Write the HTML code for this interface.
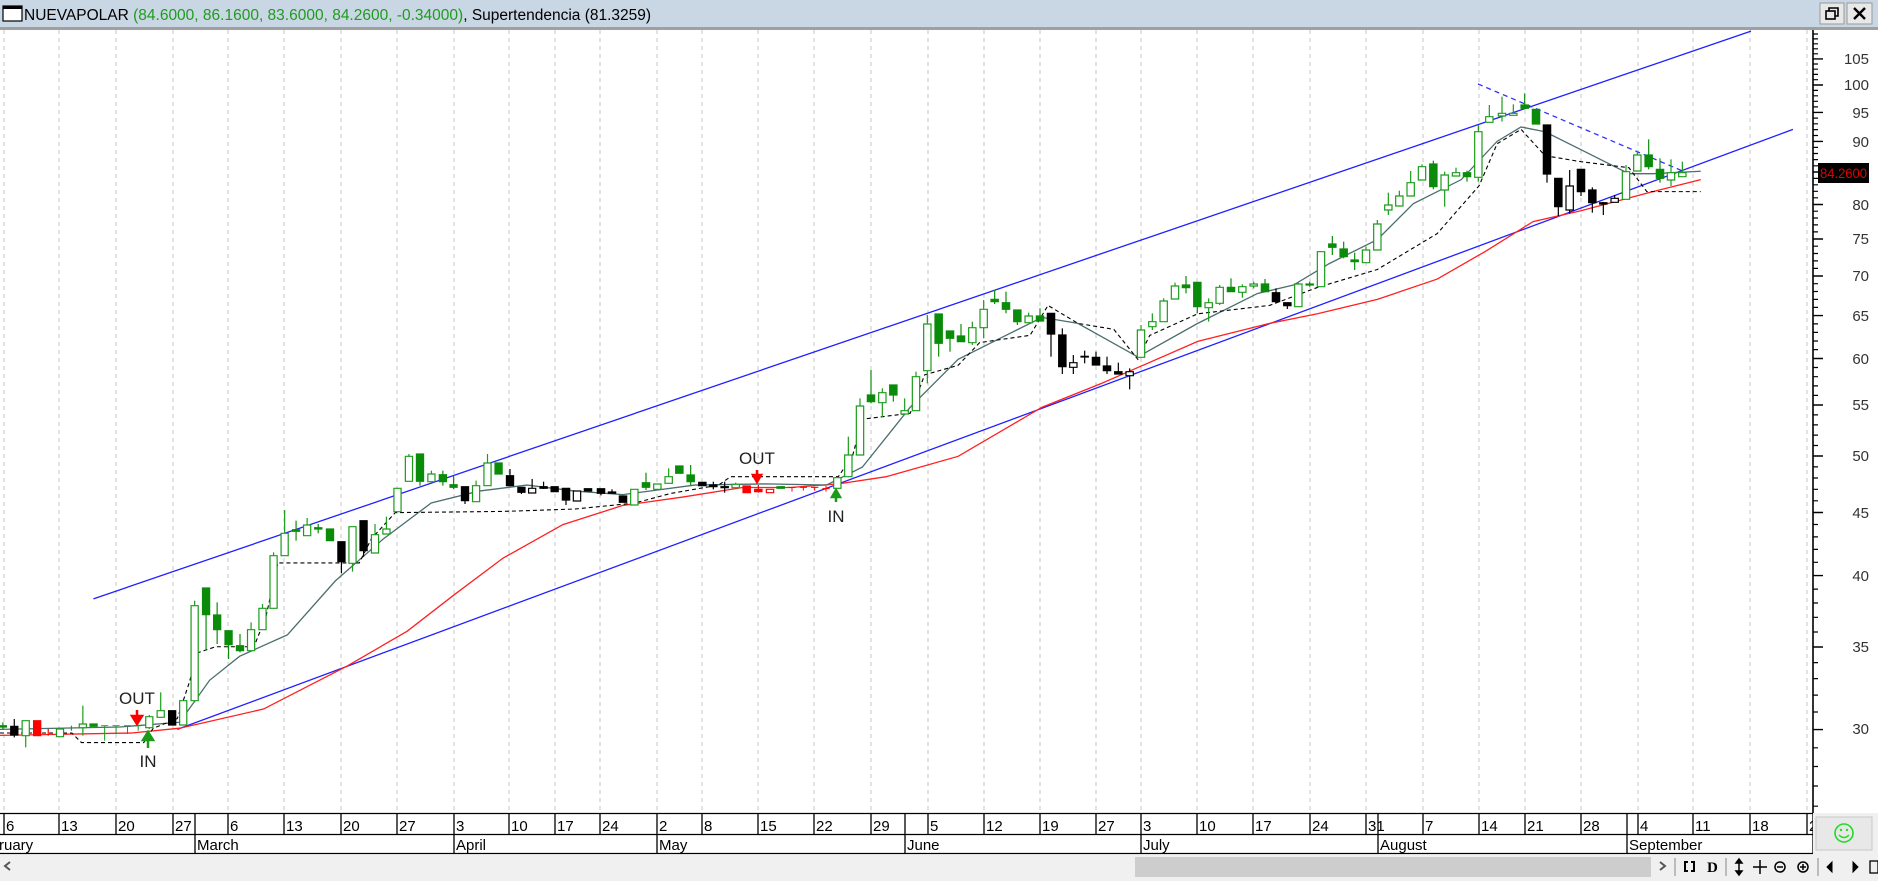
<!DOCTYPE html>
<html><head><meta charset="utf-8"><style>
html,body{margin:0;padding:0;background:#fff;}
svg{display:block;font-family:"Liberation Sans",sans-serif;}
.c line,.c rect{vector-effect:non-scaling-stroke;stroke-width:1.2;}
.g{fill:#fff;stroke:#1a9c1a;} .G{fill:#0a8c0a;stroke:#0a8c0a;}
.k{fill:#000;stroke:#000;} .w{fill:#fff;stroke:#000;}
.r{fill:#f00;stroke:#f00;} .rw{fill:#fff;stroke:#f00;}
.ln{fill:none;vector-effect:non-scaling-stroke;}
</style></head><body>
<svg width="1878" height="881" viewBox="0 0 1878 881" xmlns="http://www.w3.org/2000/svg">
<rect x="0" y="0" width="1878" height="881" fill="#fff"/>
<!-- title bar -->
<rect x="0" y="0" width="1878" height="27" fill="#c9d6e3"/>
<rect x="0" y="27" width="1878" height="3" fill="#a0a0a0"/>
<rect x="3" y="6" width="19" height="15" fill="#fff" stroke="#000" stroke-width="1.2"/>
<rect x="3" y="6" width="19" height="3" fill="#000"/>
<text x="24" y="20" font-size="15.5" fill="#000">NUEVAPOLAR <tspan fill="#1f9b1f">(84.6000, 86.1600, 83.6000, 84.2600, -0.34000)</tspan>, Supertendencia (81.3259)</text>
<rect x="1820" y="3" width="24" height="21" fill="#e8e8e8" stroke="#999"/>
<rect x="1826" y="11" width="9" height="8" fill="none" stroke="#000" stroke-width="1.6"/>
<path d="M1829 11V8h9v8h-3" fill="none" stroke="#000" stroke-width="1.6"/>
<rect x="1847" y="3" width="25" height="21" fill="#e8e8e8" stroke="#999"/>
<path d="M1854 8l11 11M1865 8l-11 11" stroke="#000" stroke-width="2.4"/>

<!-- grid -->
<g stroke="#c4c4c4" stroke-dasharray="4,4" stroke-width="1">
<path d="M4 30V812M59 30V812M116 30V812M173 30V812M228 30V812M284 30V812M341 30V812M397 30V812M454 30V812M509 30V812M555 30V812M600 30V812M657 30V812M702 30V812M758 30V812M814 30V812M871 30V812M928 30V812M984 30V812M1040 30V812M1096 30V812M1141 30V812M1197 30V812M1253 30V812M1310 30V812M1366 30V812M1423 30V812M1479 30V812M1525 30V812M1581 30V812M1638 30V812M1693 30V812M1750 30V812M1807 30V812"/>
</g>

<!-- lines in displayed coords -->
<g transform="scale(1.19770)">
<path class="ln" stroke="#2020ff" stroke-width="1.3" d="M78 500L1462 26"/>
<path class="ln" stroke="#2020ff" stroke-width="1.3" d="M148 609L1497 108"/>
<path class="ln" stroke="#ff2020" stroke-width="1.3" d="M0 614L110 612L150 608L220 592L290 556L340 527L380 496L420 466L470 438L520 422L570 415L620 407L660 407L700 404L740 398L800 381L870 340L920 320L1000 285L1060 270L1100 262L1150 250L1200 233L1240 210L1280 185L1320 176L1380 160L1420 150"/>
<path class="ln" stroke="#4b6e6e" stroke-width="1.3" d="M0 609L100 607L150 603L175 568L200 548L240 530L280 485L320 450L360 420L400 410L440 405L480 410L520 413L580 405L640 404L690 405L720 390L760 340L800 300L840 280L870 265L900 270L950 298L1000 270L1050 245L1080 238L1110 220L1150 200L1180 170L1220 150L1250 118L1270 106L1290 110L1320 125L1360 145L1380 145L1420 143"/>
<path class="ln" stroke="#000" stroke-width="1.1" stroke-dasharray="4,3" d="M0 612L60 612L68 620L120 620L128 608L148 600L158 570L165 545L180 540L212 540L222 515L232 470L300 470L310 450L330 428L420 427L480 425L530 420L560 412L600 405L610 398L660 398L700 398L712 380L720 350L760 345L772 313L800 305L818 286L860 280L875 255L900 270L930 275L950 300L960 280L1000 262L1060 255L1100 240L1150 225L1200 195L1235 155L1250 120L1270 108L1290 130L1320 135L1360 140L1375 160L1420 160"/>
</g>
<path stroke="#3030ff" stroke-width="1.3" stroke-dasharray="5,4" d="M1478 84L1685 172"/>

<!-- candles zoom4 -->
<g class="c" transform="translate(0,439) scale(0.357143,0.333333)">
<g class="G"><line x1="8" y1="850" x2="8" y2="870"/><rect x="-2" y="860" width="20" height="4"/></g>
<g class="k"><line x1="40" y1="840" x2="40" y2="895"/><rect x="30" y="862" width="20" height="26"/></g>
<g class="g"><line x1="72" y1="845" x2="72" y2="925"/><rect x="62" y="845" width="20" height="45"/></g>
<g class="r"><rect x="94" y="845" width="20" height="45"/></g>
<g class="r"><line x1="135" y1="870" x2="135" y2="890"/></g>
<g class="g"><rect x="158" y="870" width="20" height="23"/></g>
<g class="g"><line x1="200" y1="860" x2="200" y2="875"/></g>
<g class="g"><line x1="232" y1="800" x2="232" y2="890"/><rect x="222" y="855" width="20" height="11"/></g>
<g class="G"><rect x="252" y="855" width="20" height="7"/></g>
<g class="g"><path d="M283 860h20M293 860v45M315 860h20M325 860v25M347 860h20M357 860v25M377 860h20M387 860v15" stroke="#1a9c1a" stroke-width="2.8" fill="none"/></g>
<g class="g"><line x1="418" y1="828" x2="418" y2="870"/><rect x="408" y="833" width="20" height="33"/></g>
<g class="g"><line x1="450" y1="760" x2="450" y2="835"/><rect x="440" y="815" width="20" height="20"/></g>
<g class="k"><rect x="472" y="815" width="20" height="43"/></g>
<g class="g"><rect x="503" y="785" width="20" height="73"/></g>
<g class="g"><line x1="545" y1="485" x2="545" y2="790"/><rect x="535" y="500" width="20" height="285"/></g>
<g class="G"><line x1="577" y1="447" x2="577" y2="635"/><rect x="567" y="447" width="20" height="80"/></g>
<g class="G"><line x1="608" y1="490" x2="608" y2="615"/><rect x="598" y="528" width="20" height="44"/></g>
<g class="G"><line x1="640" y1="575" x2="640" y2="660"/><rect x="630" y="575" width="20" height="42"/></g>
<g class="G"><line x1="672" y1="585" x2="672" y2="640"/><rect x="662" y="620" width="20" height="15"/></g>
<g class="g"><line x1="703" y1="550" x2="703" y2="635"/><rect x="693" y="572" width="20" height="63"/></g>
<g class="g"><line x1="735" y1="495" x2="735" y2="572"/><rect x="725" y="508" width="20" height="64"/></g>
<g class="g"><line x1="766" y1="340" x2="766" y2="508"/><rect x="756" y="350" width="20" height="158"/></g>
<g class="g"><line x1="797" y1="213" x2="797" y2="350"/><rect x="787" y="283" width="20" height="67"/></g>
<g class="G"><line x1="829" y1="245" x2="829" y2="305"/><rect x="819" y="272" width="20" height="5"/></g>
<g class="g"><line x1="860" y1="237" x2="860" y2="290"/><rect x="850" y="258" width="20" height="32"/></g>
<g class="G"><line x1="891" y1="255" x2="891" y2="283"/><rect x="881" y="266" width="20" height="4"/></g>
<g class="G"><rect x="914" y="270" width="20" height="35"/></g>
<g class="k"><line x1="956" y1="308" x2="956" y2="403"/><rect x="946" y="308" width="20" height="60"/></g>
<g class="g"><line x1="987" y1="263" x2="987" y2="398"/><rect x="977" y="263" width="20" height="110"/></g>
<g class="k"><line x1="1018" y1="245" x2="1018" y2="353"/><rect x="1008" y="245" width="20" height="90"/></g>
<g class="g"><line x1="1050" y1="255" x2="1050" y2="342"/><rect x="1040" y="287" width="20" height="55"/></g>
<g class="g"><line x1="1082" y1="233" x2="1082" y2="285"/><rect x="1072" y="270" width="20" height="15"/></g>
<g class="g"><line x1="1113" y1="148" x2="1113" y2="220"/><rect x="1103" y="148" width="20" height="70"/></g>
<g class="g"><line x1="1145" y1="45" x2="1145" y2="127"/><rect x="1135" y="52" width="20" height="75"/></g>
<g class="G"><line x1="1176" y1="45" x2="1176" y2="140"/><rect x="1166" y="45" width="20" height="82"/></g>
<g class="g"><line x1="1208" y1="95" x2="1208" y2="128"/><rect x="1198" y="105" width="20" height="23"/></g>
<g class="G"><line x1="1240" y1="95" x2="1240" y2="140"/><rect x="1230" y="107" width="20" height="21"/></g>
<g class="G"><line x1="1270" y1="110" x2="1270" y2="150"/><rect x="1260" y="137" width="20" height="8"/></g>
<g class="k"><line x1="1302" y1="143" x2="1302" y2="195"/><rect x="1292" y="143" width="20" height="42"/></g>
<g class="g"><line x1="1333" y1="125" x2="1333" y2="188"/><rect x="1323" y="140" width="20" height="48"/></g>
<g class="g"><line x1="1365" y1="45" x2="1365" y2="140"/><rect x="1355" y="72" width="20" height="68"/></g>
<g class="G"><rect x="1386" y="72" width="20" height="33"/></g>
<g class="k"><line x1="1428" y1="90" x2="1428" y2="140"/><rect x="1418" y="110" width="20" height="30"/></g>
<g class="k"><line x1="1460" y1="145" x2="1460" y2="165"/><rect x="1450" y="145" width="20" height="15"/></g>
<g class="w"><line x1="1490" y1="120" x2="1490" y2="162"/><rect x="1480" y="148" width="20" height="14"/></g>
<g class="k"><line x1="1522" y1="128" x2="1522" y2="150"/><rect x="1512" y="143" width="20" height="5"/></g>
<g class="k"><rect x="1543" y="143" width="20" height="15"/></g>
</g>

<!-- candles zoom5 -->
<g class="c" transform="translate(440,430) scale(0.333333)">
<g class="k"><line x1="378" y1="175" x2="378" y2="225"/><rect x="367" y="175" width="22" height="35"/></g>
<g class="w"><rect x="400" y="183" width="22" height="30"/></g>
<g class="k"><rect x="433" y="176" width="22" height="7"/></g>
<g class="k"><line x1="483" y1="176" x2="483" y2="196"/><rect x="472" y="176" width="22" height="14"/></g>
<g class="k"><line x1="516" y1="178" x2="516" y2="190"/><rect x="505" y="186" width="22" height="4"/></g>
<g class="k"><rect x="538" y="198" width="22" height="19"/></g>
<g class="g"><rect x="572" y="178" width="22" height="47"/></g>
<g class="G"><line x1="618" y1="128" x2="618" y2="180"/><rect x="607" y="158" width="22" height="14"/></g>
<g class="g"><rect x="641" y="162" width="22" height="16"/></g>
<g class="g"><line x1="686" y1="115" x2="686" y2="160"/><rect x="675" y="140" width="22" height="20"/></g>
<g class="G"><rect x="707" y="108" width="22" height="22"/></g>
<g class="G"><line x1="752" y1="105" x2="752" y2="165"/><rect x="741" y="135" width="22" height="20"/></g>
<g class="k"><rect x="776" y="157" width="22" height="10"/></g>
<g class="k"><line x1="820" y1="155" x2="820" y2="178"/><rect x="809" y="165" width="22" height="5"/></g>
<g class="k"><line x1="854" y1="155" x2="854" y2="188"/><rect x="843" y="170" width="22" height="3"/></g>
<g class="g"><line x1="887" y1="158" x2="887" y2="173"/><rect x="876" y="163" width="22" height="10"/></g>
<g class="r"><rect x="909" y="168" width="22" height="20"/></g>
<g class="r"><line x1="955" y1="165" x2="955" y2="188"/><rect x="944" y="178" width="22" height="7"/></g>
<g class="rw"><rect x="979" y="178" width="22" height="10"/></g>
<g class="G"><rect x="1011" y="170" width="22" height="5"/></g>
<g class="r"><path d="M1045 172h22M1056 172v13M1079 172h22M1090 172v10M1113 172h22M1124 172v10M1147 176h22M1158 168v17" stroke="#f00" stroke-width="3" fill="none"/></g>
<g class="g"><rect x="1181" y="143" width="22" height="32"/></g>
</g>

<!-- candles zoom6 -->
<g class="c" transform="translate(840,260) scale(0.333333)">
<g class="g"><line x1="25" y1="530" x2="25" y2="650"/><rect x="14" y="585" width="22" height="65"/></g>
<g class="g"><line x1="60" y1="415" x2="60" y2="585"/><rect x="49" y="438" width="22" height="147"/></g>
<g class="G"><line x1="93" y1="330" x2="93" y2="430"/><rect x="82" y="405" width="22" height="20"/></g>
<g class="g"><line x1="127" y1="385" x2="127" y2="472"/><rect x="116" y="398" width="22" height="30"/></g>
<g class="G"><line x1="160" y1="375" x2="160" y2="425"/><rect x="149" y="375" width="22" height="30"/></g>
<g class="g"><line x1="194" y1="415" x2="194" y2="462"/><rect x="183" y="452" width="22" height="10"/></g>
<g class="g"><line x1="228" y1="335" x2="228" y2="452"/><rect x="217" y="350" width="22" height="102"/></g>
<g class="g"><line x1="262" y1="165" x2="262" y2="370"/><rect x="251" y="192" width="22" height="140"/></g>
<g class="G"><line x1="296" y1="162" x2="296" y2="290"/><rect x="285" y="162" width="22" height="88"/></g>
<g class="G"><line x1="330" y1="213" x2="330" y2="275"/><rect x="319" y="213" width="22" height="22"/></g>
<g class="G"><line x1="363" y1="192" x2="363" y2="245"/><rect x="352" y="228" width="22" height="17"/></g>
<g class="g"><line x1="397" y1="185" x2="397" y2="255"/><rect x="386" y="203" width="22" height="45"/></g>
<g class="g"><line x1="431" y1="120" x2="431" y2="235"/><rect x="420" y="148" width="22" height="55"/></g>
<g class="G"><line x1="464" y1="90" x2="464" y2="132"/><rect x="453" y="118" width="22" height="7"/></g>
<g class="G"><line x1="498" y1="95" x2="498" y2="160"/><rect x="487" y="128" width="22" height="20"/></g>
<g class="G"><line x1="532" y1="150" x2="532" y2="195"/><rect x="521" y="150" width="22" height="35"/></g>
<g class="g"><line x1="566" y1="158" x2="566" y2="188"/><rect x="555" y="168" width="22" height="20"/></g>
<g class="G"><line x1="600" y1="145" x2="600" y2="183"/><rect x="589" y="168" width="22" height="15"/></g>
<g class="k"><line x1="633" y1="160" x2="633" y2="290"/><rect x="622" y="160" width="22" height="62"/></g>
<g class="k"><line x1="667" y1="205" x2="667" y2="342"/><rect x="656" y="225" width="22" height="95"/></g>
<g class="w"><line x1="700" y1="285" x2="700" y2="342"/><rect x="689" y="308" width="22" height="14"/></g>
<g class="k"><line x1="734" y1="272" x2="734" y2="310"/><rect x="723" y="289" width="22" height="2"/></g>
<g class="k"><line x1="768" y1="275" x2="768" y2="315"/><rect x="757" y="292" width="22" height="23"/></g>
<g class="k"><line x1="801" y1="290" x2="801" y2="342"/><rect x="790" y="318" width="22" height="14"/></g>
<g class="k"><line x1="835" y1="308" x2="835" y2="342"/><rect x="824" y="335" width="22" height="7"/></g>
<g class="w"><line x1="869" y1="325" x2="869" y2="388"/><rect x="858" y="335" width="22" height="12"/></g>
<g class="g"><line x1="903" y1="195" x2="903" y2="292"/><rect x="892" y="210" width="22" height="82"/></g>
<g class="g"><line x1="937" y1="160" x2="937" y2="210"/><rect x="926" y="185" width="22" height="15"/></g>
<g class="g"><line x1="971" y1="115" x2="971" y2="185"/><rect x="960" y="123" width="22" height="62"/></g>
<g class="g"><line x1="1005" y1="68" x2="1005" y2="117"/><rect x="994" y="78" width="22" height="39"/></g>
<g class="G"><line x1="1038" y1="48" x2="1038" y2="100"/><rect x="1027" y="75" width="22" height="8"/></g>
<g class="G"><line x1="1072" y1="67" x2="1072" y2="160"/><rect x="1061" y="67" width="22" height="73"/></g>
<g class="g"><line x1="1106" y1="115" x2="1106" y2="185"/><rect x="1095" y="128" width="22" height="15"/></g>
<g class="g"><line x1="1139" y1="75" x2="1139" y2="135"/><rect x="1128" y="82" width="22" height="48"/></g>
<g class="G"><line x1="1173" y1="55" x2="1173" y2="95"/><rect x="1162" y="82" width="22" height="13"/></g>
<g class="g"><line x1="1207" y1="73" x2="1207" y2="113"/><rect x="1196" y="80" width="22" height="17"/></g>
<g class="g"><line x1="1241" y1="65" x2="1241" y2="85"/><rect x="1230" y="72" width="22" height="6"/></g>
<g class="G"><line x1="1275" y1="57" x2="1275" y2="95"/><rect x="1264" y="72" width="22" height="23"/></g>
<g class="k"><line x1="1308" y1="85" x2="1308" y2="130"/><rect x="1297" y="98" width="22" height="27"/></g>
<g class="k"><line x1="1342" y1="128" x2="1342" y2="147"/><rect x="1331" y="128" width="22" height="9"/></g>
<g class="g"><line x1="1375" y1="68" x2="1375" y2="140"/><rect x="1364" y="72" width="22" height="68"/></g>
<g class="G"><line x1="1409" y1="65" x2="1409" y2="80"/><rect x="1398" y="72" width="22" height="3"/></g>
</g>

<!-- candles zoom7 -->
<g class="c" transform="translate(1320,70) scale(0.333333)">
<g class="g"><rect x="-8" y="545" width="22" height="105"/></g>
<g class="G"><line x1="37" y1="498" x2="37" y2="555"/><rect x="26" y="522" width="22" height="10"/></g>
<g class="G"><line x1="71" y1="515" x2="71" y2="565"/><rect x="60" y="537" width="22" height="23"/></g>
<g class="G"><line x1="104" y1="548" x2="104" y2="600"/><rect x="93" y="570" width="22" height="5"/></g>
<g class="g"><line x1="138" y1="530" x2="138" y2="578"/><rect x="127" y="540" width="22" height="38"/></g>
<g class="g"><line x1="172" y1="450" x2="172" y2="540"/><rect x="161" y="462" width="22" height="78"/></g>
<g class="g"><line x1="205" y1="368" x2="205" y2="435"/><rect x="194" y="405" width="22" height="15"/></g>
<g class="g"><line x1="238" y1="362" x2="238" y2="408"/><rect x="227" y="378" width="22" height="30"/></g>
<g class="g"><line x1="272" y1="303" x2="272" y2="378"/><rect x="261" y="338" width="22" height="40"/></g>
<g class="g"><line x1="306" y1="283" x2="306" y2="330"/><rect x="295" y="290" width="22" height="40"/></g>
<g class="G"><line x1="340" y1="272" x2="340" y2="358"/><rect x="329" y="282" width="22" height="68"/></g>
<g class="g"><line x1="374" y1="305" x2="374" y2="410"/><rect x="363" y="315" width="22" height="45"/></g>
<g class="g"><line x1="408" y1="293" x2="408" y2="318"/><rect x="397" y="308" width="22" height="10"/></g>
<g class="G"><line x1="441" y1="302" x2="441" y2="335"/><rect x="430" y="308" width="22" height="12"/></g>
<g class="g"><line x1="475" y1="165" x2="475" y2="335"/><rect x="464" y="185" width="22" height="137"/></g>
<g class="g"><line x1="508" y1="105" x2="508" y2="157"/><rect x="497" y="140" width="22" height="17"/></g>
<g class="g"><line x1="546" y1="80" x2="546" y2="155"/><rect x="535" y="130" width="22" height="8"/></g>
<g class="g"><line x1="580" y1="103" x2="580" y2="136"/><rect x="569" y="130" width="22" height="6"/></g>
<g class="G"><line x1="614" y1="70" x2="614" y2="115"/><rect x="603" y="105" width="22" height="10"/></g>
<g class="G"><rect x="637" y="118" width="22" height="44"/></g>
<g class="k"><line x1="681" y1="165" x2="681" y2="338"/><rect x="670" y="165" width="22" height="147"/></g>
<g class="k"><line x1="715" y1="325" x2="715" y2="438"/><rect x="704" y="325" width="22" height="85"/></g>
<g class="w"><line x1="749" y1="300" x2="749" y2="430"/><rect x="738" y="348" width="22" height="72"/></g>
<g class="k"><line x1="783" y1="298" x2="783" y2="378"/><rect x="772" y="298" width="22" height="67"/></g>
<g class="k"><line x1="817" y1="352" x2="817" y2="428"/><rect x="806" y="360" width="22" height="38"/></g>
<g class="k"><line x1="850" y1="396" x2="850" y2="435"/><rect x="839" y="398" width="22" height="4"/></g>
<g class="w"><line x1="884" y1="375" x2="884" y2="397"/><rect x="873" y="385" width="22" height="12"/></g>
<g class="g"><line x1="918" y1="285" x2="918" y2="388"/><rect x="907" y="305" width="22" height="83"/></g>
<g class="g"><line x1="952" y1="243" x2="952" y2="303"/><rect x="941" y="255" width="22" height="48"/></g>
<g class="G"><line x1="986" y1="208" x2="986" y2="298"/><rect x="975" y="255" width="22" height="35"/></g>
<g class="G"><line x1="1020" y1="265" x2="1020" y2="338"/><rect x="1009" y="298" width="22" height="27"/></g>
<g class="g"><line x1="1053" y1="268" x2="1053" y2="348"/><rect x="1042" y="308" width="22" height="22"/></g>
<g class="g"><line x1="1087" y1="275" x2="1087" y2="320"/><rect x="1076" y="308" width="22" height="12"/></g>
</g>

<!-- signals -->
<g font-size="17" text-anchor="middle" fill="#222">
<text x="137" y="704">OUT</text>
<text x="148" y="767">IN</text>
<text x="757" y="464">OUT</text>
<text x="836" y="522">IN</text>
</g>
<path d="M137 710v10M132 716l5 8 5-8z" stroke="#f00" stroke-width="2.5" fill="#f00"/>
<path d="M148 748v-10M143 740l5-8 5 8z" stroke="#1a9c1a" stroke-width="2.5" fill="#1a9c1a"/>
<path d="M757 470v8M753 475l4 7 4-7z" stroke="#f00" stroke-width="2.5" fill="#f00"/>
<path d="M836 502v-8M832 497l4-7 4 7z" stroke="#1a9c1a" stroke-width="2.5" fill="#1a9c1a"/>

<!-- right axis -->
<rect x="1813" y="30" width="65" height="783" fill="#fff"/>
<path d="M1813 30V813" stroke="#000" stroke-width="1.6"/>
<path stroke="#000" stroke-width="1.2" d="M1813 806.2h5M1813 786h5M1813 766.5h5M1813 747.8h5M1813 712h5M1813 695.1h5M1813 678.6h5M1813 662.6h5M1813 632h5M1813 617.3h5M1813 603h5M1813 589.1h5M1813 562.3h5M1813 549.4h5M1813 536.9h5M1813 524.5h5M1813 500.8h5M1813 489.3h5M1813 478h5M1813 466.9h5M1813 445.5h5M1813 435.1h5M1813 424.9h5M1813 414.9h5M1813 395.4h5M1813 385.9h5M1813 376.7h5M1813 367.5h5M1813 349.6h5M1813 341h5M1813 332.4h5M1813 323.9h5M1813 307.4h5M1813 299.4h5M1813 291.5h5M1813 283.7h5M1813 268.4h5M1813 260.9h5M1813 253.5h5M1813 246.2h5M1813 231.9h5M1813 224.9h5M1813 218h5M1813 211.2h5M1813 197.8h5M1813 191.3h5M1813 184.8h5M1813 178.4h5M1813 165.8h5M1813 159.6h5M1813 153.5h5M1813 147.4h5M1813 135.5h5M1813 129.6h5M1813 123.8h5M1813 118.1h5M1813 106.9h5M1813 101.3h5M1813 95.8h5M1813 90.4h5M1813 79.7h5M1813 74.4h5M1813 69.2h5M1813 64h5M1813 53.8h5M1813 48.8h5M1813 43.8h5M1813 38.9h5M1813 34h5"/>
<path stroke="#000" stroke-width="1.4" d="M1813 729.6h10M1813 647h10M1813 575.6h10M1813 512.5h10M1813 456h10M1813 405h10M1813 358.5h10M1813 315.6h10M1813 276h10M1813 239h10M1813 204.5h10M1813 172h10M1813 141.4h10M1813 112.4h10M1813 85h10M1813 58.9h10"/>
<g font-size="15" fill="#333" text-anchor="end">
<text x="1869" y="734">30</text><text x="1869" y="652">35</text><text x="1869" y="581">40</text><text x="1869" y="518">45</text><text x="1869" y="461">50</text><text x="1869" y="410">55</text><text x="1869" y="364">60</text><text x="1869" y="321">65</text><text x="1869" y="281">70</text><text x="1869" y="244">75</text><text x="1869" y="210">80</text><text x="1869" y="147">90</text><text x="1869" y="118">95</text><text x="1869" y="90">100</text><text x="1869" y="64">105</text>
</g>
<rect x="1818" y="163" width="51" height="20" fill="#000"/>
<text x="1820" y="178" font-size="14" fill="#e00000" textLength="47" lengthAdjust="spacingAndGlyphs">84.2600</text>

<!-- date rows -->
<rect x="0" y="813" width="1813" height="41" fill="#fff"/>
<path d="M0 813.5H1813M0 834.5H1813M0 853.5H1813" stroke="#000" stroke-width="1.3"/>
<path stroke="#000" stroke-width="1.3" d="M4 813V834M59 813V834M116 813V834M173 813V834M195 813V853M228 813V834M284 813V834M341 813V834M397 813V834M454 813V853M509 813V834M555 813V834M600 813V834M657 813V853M702 813V834M758 813V834M814 813V834M871 813V834M905 813V853M928 813V834M984 813V834M1040 813V834M1096 813V834M1141 813V853M1197 813V834M1253 813V834M1310 813V834M1366 813V834M1378 813V853M1423 813V834M1479 813V834M1525 813V834M1581 813V834M1627 813V853M1638 813V834M1693 813V834M1750 813V834M1807 813V834M1813 813V853"/>
<g font-size="15" fill="#000">
<text x="6" y="831">6</text><text x="61" y="831">13</text><text x="118" y="831">20</text><text x="175" y="831">27</text><text x="230" y="831">6</text><text x="286" y="831">13</text><text x="343" y="831">20</text><text x="399" y="831">27</text><text x="456" y="831">3</text><text x="511" y="831">10</text><text x="557" y="831">17</text><text x="602" y="831">24</text><text x="659" y="831">2</text><text x="704" y="831">8</text><text x="760" y="831">15</text><text x="816" y="831">22</text><text x="873" y="831">29</text><text x="930" y="831">5</text><text x="986" y="831">12</text><text x="1042" y="831">19</text><text x="1098" y="831">27</text><text x="1143" y="831">3</text><text x="1199" y="831">10</text><text x="1255" y="831">17</text><text x="1312" y="831">24</text><text x="1368" y="831">31</text><text x="1425" y="831">7</text><text x="1481" y="831">14</text><text x="1527" y="831">21</text><text x="1583" y="831">28</text><text x="1640" y="831">4</text><text x="1695" y="831">11</text><text x="1752" y="831">18</text><text x="1809" y="831">2</text>
<text x="-1" y="850">ruary</text><text x="197" y="850">March</text><text x="456" y="850">April</text><text x="659" y="850">May</text><text x="907" y="850">June</text><text x="1143" y="850">July</text><text x="1380" y="850">August</text><text x="1629" y="850">September</text>
</g>
<rect x="1813" y="813" width="65" height="43" fill="#f0f0f0"/>
<rect x="1816" y="817" width="56" height="33" fill="#e8e8e8" stroke="#c8c8c8"/>
<circle cx="1844" cy="833" r="9" fill="none" stroke="#22dd22" stroke-width="1.6"/>
<circle cx="1841" cy="830" r="1.2" fill="#22dd22"/><circle cx="1847" cy="830" r="1.2" fill="#22dd22"/>
<path d="M1839 835q5 5 10 0" fill="none" stroke="#22dd22" stroke-width="1.5"/>

<!-- scrollbar / toolbar -->
<rect x="0" y="855" width="1878" height="26" fill="#f0f0f0"/>
<rect x="1135" y="857" width="516" height="20" fill="#cdcdcd"/>
<path d="M10 862l-5 4 5 4" fill="none" stroke="#555" stroke-width="2"/>
<path d="M1660 862l5 4-5 4" fill="none" stroke="#555" stroke-width="2"/>
<g stroke="#888" stroke-width="1"><path d="M1675 858v18M1726 858v18M1818 858v18"/></g>
<g fill="#000" stroke="#000">
<path d="M1688 862h-3v9h3M1691 871h3v-9h-3" fill="none" stroke-width="2"/>
<text x="1707" y="872" font-size="15" font-weight="bold" font-family="Liberation Serif,serif" stroke="none">D</text>
<path d="M1739 859l-3 4h6zM1739 875l-3-4h6zM1739 862v10" stroke-width="1.5"/>
<path d="M1760 860v14M1753 867h14" stroke-width="1.5"/>
<circle cx="1780" cy="867" r="5" fill="none" stroke-width="1.5"/><path d="M1777 867h6" stroke-width="1.5"/>
<circle cx="1803" cy="867" r="5" fill="none" stroke-width="1.5"/><path d="M1800 867h6M1803 864v6" stroke-width="1.5"/>
<path d="M1832 862l-5 5 5 5z"/><path d="M1853 862l5 5-5 5z"/>
<rect x="1870" y="861" width="8" height="12" fill="none" stroke-width="1.3"/>
</g>
</svg>
</body></html>
